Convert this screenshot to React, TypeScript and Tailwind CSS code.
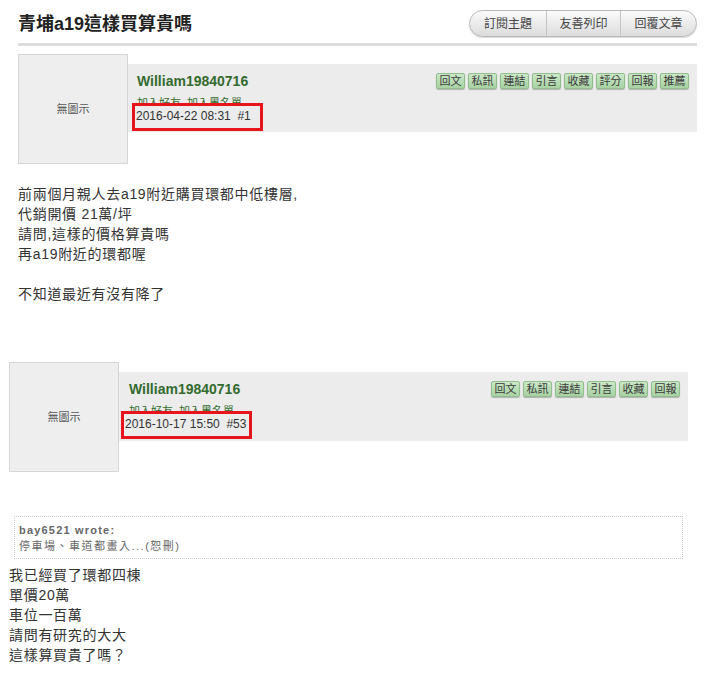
import React from 'react';

const FONT = { fontFamily: '"Liberation Sans", Arial, "Noto Sans CJK TC", sans-serif' };

function ActionButton({ label }: { label: string }) {
  return (
    <span className="flex h-[16px] w-[29px] items-center justify-center rounded-[2px] border border-[#8fbd8b] bg-gradient-to-b from-[#cbe7c7] to-[#a8d2a3] text-[11px] leading-none text-[#3a3a3a] shadow-[0_1px_1px_rgba(0,0,0,0.25)]">
      {label}
    </span>
  );
}

function Avatar() {
  return (
    <div className="flex h-[110px] w-[110px] shrink-0 items-center justify-center border border-[#d6d6d6] bg-[#eeeeee] text-[11px] text-[#555]">
      無圖示
    </div>
  );
}

function PostHeader({ date, floor, actions, barCls, nameCls }: { date: string; floor: string; actions: string[]; barCls: string; nameCls: string }) {
  return (
    <div className="flex items-start">
      <Avatar />
      <div className={`mt-[10px] flex flex-1 justify-between bg-[#ececec] pr-[8px] ${barCls}`}>
        <div className="flex flex-col">
          <div className={`pt-[8px] text-[14px] font-bold leading-[18px] text-[#336b2f] ${nameCls}`}>William19840716</div>
          <div className={`mt-[6px] h-[7px] overflow-hidden text-[11px] leading-[14px] text-[#336b2f] ${nameCls}`}>加入好友&nbsp;&nbsp;加入黑名單</div>
          <div className="flex h-[28px] w-[131px] items-center border-[3px] border-[#e8141c] pb-[2px] pl-[1px] text-[12px] text-[#333]">
            {date}&nbsp;&nbsp;{floor}
          </div>
        </div>
        <div className="mt-[9px] flex gap-[3px]">
          {actions.map((a) => (
            <ActionButton key={a} label={a} />
          ))}
        </div>
      </div>
    </div>
  );
}

export default function App() {
  const body1 = ['前兩個月親人去a19附近購買環都中低樓層,', '代銷開價 21萬/坪', '請問,這樣的價格算貴嗎', '再a19附近的環都喔', '', '不知道最近有沒有降了'];
  const body2 = ['我已經買了環都四棟', '單價20萬', '車位一百萬', '請問有研究的大大', '這樣算買貴了嗎？'];

  return (
    <div className="min-h-[698px] w-[720px] bg-white" style={FONT}>
      {/* Title bar */}
      <div className="ml-[18px] mr-[23px] flex items-end justify-between border-b-[3px] border-[#dddddd] pt-[10px] pb-[6px]">
        <h1 className="pb-[1px] text-[18px] font-bold leading-[24px] text-[#222]">青埔a19這樣買算貴嗎</h1>
        <div className="flex h-[27px] overflow-hidden rounded-full border border-[#b8b8b8] bg-gradient-to-b from-[#fbfbfb] to-[#dcdcdc] text-[12px] text-[#444] shadow-[0_1px_1px_rgba(0,0,0,0.15)]">
          <span className="flex w-[77px] items-center justify-center border-r border-[#c4c4c4]">訂閱主題</span>
          <span className="flex w-[74px] items-center justify-center border-r border-[#c4c4c4]">友善列印</span>
          <span className="flex w-[75px] items-center justify-center">回覆文章</span>
        </div>
      </div>

      {/* Post #1 */}
      <div className="ml-[18px] mr-[23px] mt-[8px]">
        <PostHeader date="2016-04-22 08:31" floor="#1" actions={['回文', '私訊', '連結', '引言', '收藏', '評分', '回報', '推薦']} barCls="h-[68px] pl-[4px]" nameCls="pl-[5px]" />
        <div className="mt-[20px] text-[14px] leading-[20px] tracking-[0.7px] text-[#333]">
          {body1.map((l, i) => (
            <div key={i} className="h-[20px]">{l}</div>
          ))}
        </div>
      </div>

      {/* Post #53 */}
      <div className="ml-[9px] mr-[32px] mt-[58px]">
        <PostHeader date="2016-10-17 15:50" floor="#53" actions={['回文', '私訊', '連結', '引言', '收藏', '回報']} barCls="h-[69px] pl-[2px]" nameCls="pl-[8px]" />
      </div>

      <div className="ml-[14px] mr-[37px] mt-[44px] border border-dotted border-[#c8c8c8] px-[4px] pb-[4px] pt-[6px]">
        <div className="text-[11px] font-bold leading-[15px] tracking-[1.2px] text-[#666]">bay6521 wrote:</div>
        <div className="text-[11px] leading-[16px] tracking-[1.5px] text-[#666]">停車場、車道都畫入...(恕刪)</div>
      </div>

      <div className="ml-[9px] mt-[6px] text-[14px] leading-[20px] tracking-[0.7px] text-[#333]">
        {body2.map((l, i) => (
          <div key={i}>{l}</div>
        ))}
      </div>
    </div>
  );
}
